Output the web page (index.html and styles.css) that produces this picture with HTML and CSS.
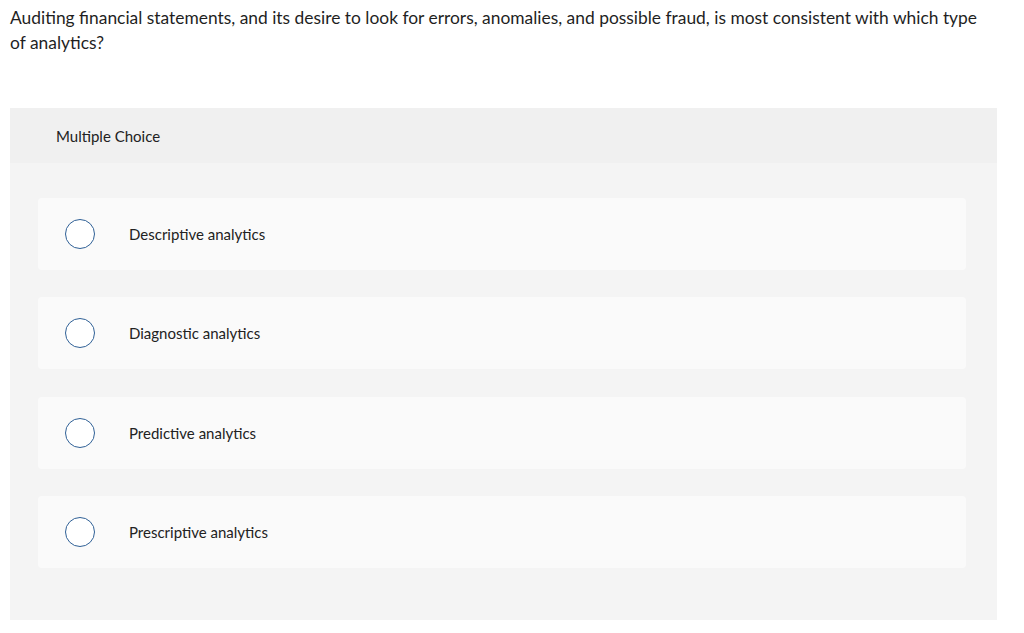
FILE: index.html
```html
<!DOCTYPE html>
<html lang="en">
<head>
<meta charset="utf-8">
<title>Multiple Choice</title>
<link rel="stylesheet" href="styles.css">
</head>
<body>
<main class="page">
  <p class="question">Auditing financial statements, and its desire to look for errors, anomalies, and possible fraud, is most consistent with which type of analytics?</p>
  <section class="panel">
    <header class="panel-head">Multiple Choice</header>
    <div class="options">
      <label class="option"><span class="radio"></span><span class="opt-text">Descriptive analytics</span></label>
      <label class="option"><span class="radio"></span><span class="opt-text">Diagnostic analytics</span></label>
      <label class="option"><span class="radio"></span><span class="opt-text">Predictive analytics</span></label>
      <label class="option"><span class="radio"></span><span class="opt-text">Prescriptive analytics</span></label>
    </div>
  </section>
</main>
</body>
</html>
```

FILE: styles.css
```css
html, body {
  margin: 0;
  padding: 0;
  background: #ffffff;
}
body {
  font-family: Lato, "Open Sans", "Liberation Sans", sans-serif;
  color: #222222;
}
.page {
  width: 987px;
  padding: 5px 0 0 10px;
}
.question {
  margin: 0;
  padding-right: 10px;
  font-size: 17.4px;
  line-height: 25px;
  color: #1f1f1f;
}
.panel {
  margin-top: 53px;
  background: #f4f4f4;
}
.panel-head {
  height: 55px;
  box-sizing: border-box;
  padding: 0 0 0 46px;
  display: flex;
  align-items: center;
  background: #f0f0f0;
  font-size: 15px;
  color: #222;
}
.options {
  display: flex;
  flex-direction: column;
  gap: 27.4px;
  padding: 35px 31px 52px 28px;
}
.option {
  height: 72px;
  display: flex;
  align-items: center;
  background: #fafafa;
  border-radius: 4px;
  padding-left: 27px;
}
.radio {
  width: 28px;
  height: 28px;
  border: 1.5px solid #2f6096;
  border-radius: 50%;
  background: #fff;
  flex: none;
}
.opt-text {
  margin-left: 34px;
  font-size: 15px;
  color: #222;
}
```
